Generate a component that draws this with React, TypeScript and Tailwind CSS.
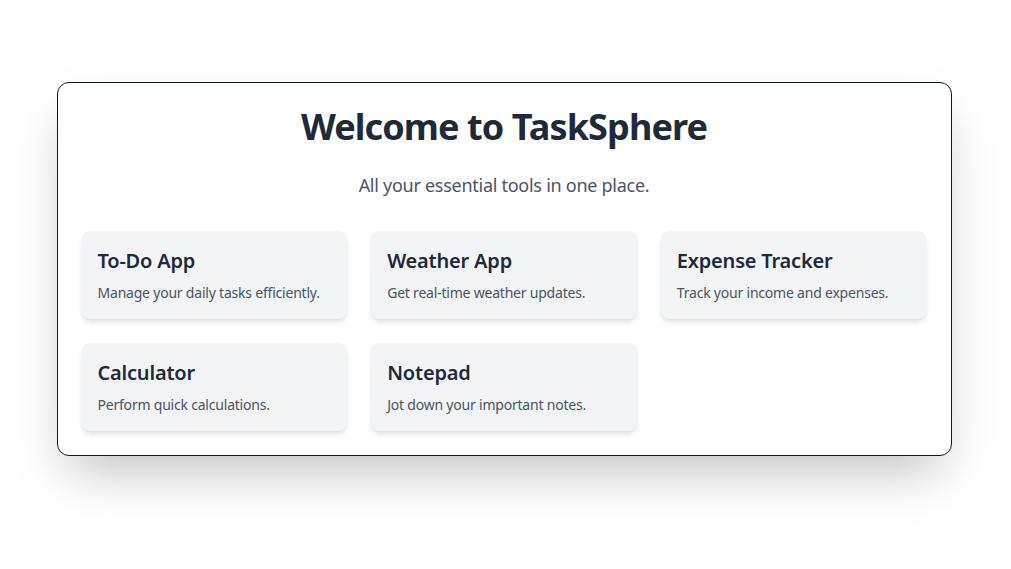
import React from "react";

interface Tool {
  name: string;
  description: string;
}

const tools: Tool[] = [
  { name: "To-Do App", description: "Manage your daily tasks efficiently." },
  { name: "Weather App", description: "Get real-time weather updates." },
  { name: "Expense Tracker", description: "Track your income and expenses." },
  { name: "Calculator", description: "Perform quick calculations." },
  { name: "Notepad", description: "Jot down your important notes." },
];

function ToolCard({ tool }: { tool: Tool }) {
  return (
    <div className="bg-gray-100 rounded-lg p-4 shadow-md">
      <h2 className="text-xl font-semibold text-gray-800 tracking-[-0.01em]">{tool.name}</h2>
      <p className="mt-2 text-sm text-gray-600 tracking-[-0.015em]">{tool.description}</p>
    </div>
  );
}

export default function App() {
  return (
    <div
      className="min-h-screen bg-white pt-[82px] pl-4 pr-[19px]"
      style={{ fontFamily: '"Noto Sans", sans-serif' }}
    >
      <div className="max-w-[895px] mx-auto bg-white border border-gray-900 rounded-xl shadow-2xl p-6">
        <h1 className="text-4xl font-bold text-gray-800 text-center tracking-tight">Welcome to TaskSphere</h1>
        <p className="mt-6 text-lg text-gray-600 text-center tracking-[-0.015em]">All your essential tools in one place.</p>
        <div className="mt-8 grid grid-cols-3 gap-6">
          {tools.map((tool) => (
            <ToolCard key={tool.name} tool={tool} />
          ))}
        </div>
      </div>
    </div>
  );
}
